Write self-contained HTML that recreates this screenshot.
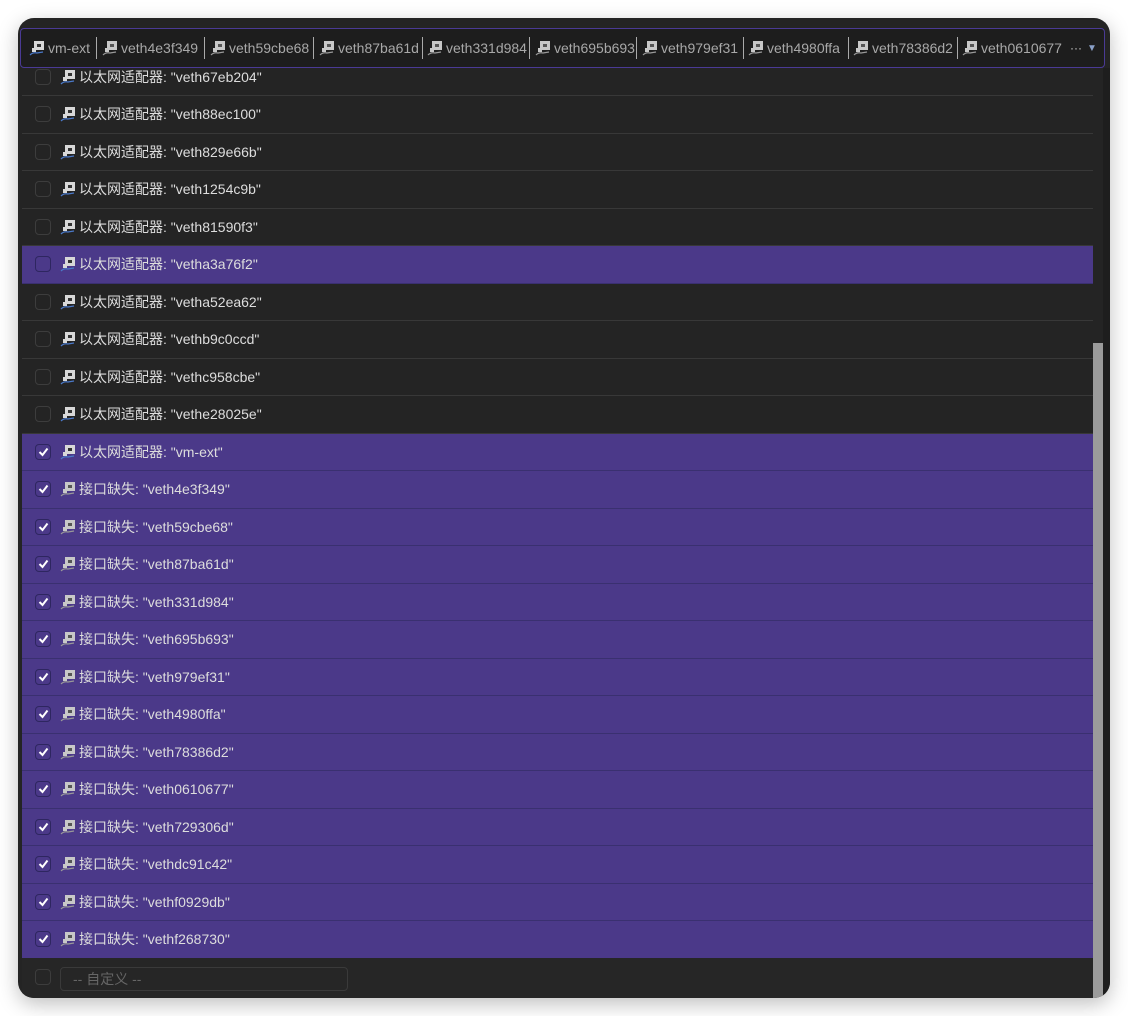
<!DOCTYPE html>
<html><head><meta charset="utf-8"><style>
*{margin:0;padding:0;box-sizing:border-box}
body{width:1128px;height:1016px;background:#fff;position:relative;overflow:hidden;font-family:"Liberation Sans","Noto Sans CJK SC",sans-serif}
.win{position:absolute;left:18px;top:18px;width:1092px;height:980px;background:#242424;border-radius:16px;overflow:hidden;box-shadow:0 6px 20px rgba(0,0,0,.25)}
.hdr{position:absolute;left:2px;top:10px;width:1085px;height:40px;background:#1d1d1d;border:1px solid #4a3a95;border-radius:4px;z-index:5}
.tab{position:absolute;top:0;height:38px;display:flex;align-items:center;color:#a8a8a8;font-size:14px;white-space:nowrap}
.tab svg{margin-right:3px}
.sep{position:absolute;top:8px;width:1px;height:22px;background:#aaa}
.row{position:absolute;left:4px;width:1071px;height:37.5px;display:flex;align-items:center;color:#ddd;font-size:14px;border-bottom:1px solid #383838}
.row.p{background:#4b3989;border-bottom:1px solid #3a3070}
.cb{width:16px;height:16px;border:1px solid #3d3d3d;border-radius:4px;margin-left:13px;margin-right:9px;display:flex;align-items:center;justify-content:center}
.p .cb{border-color:#2e2660}
.row svg{margin-right:3px}
.sb{position:absolute;left:1075px;top:325px;width:10px;height:655px;background:#9b9b9b}
.rs{position:absolute;left:1085px;top:50px;width:7px;height:930px;background:#1e1e1e}
.foot{position:absolute;left:4px;top:940px;width:1071px;height:40px;background:#262626}
.inp{position:absolute;left:38px;top:9px;width:288px;height:24px;border:1px solid #3a3a3a;border-radius:4px;color:#666;font-size:14px;padding-left:12px;line-height:22px}
</style></head><body>
<svg width="0" height="0" style="position:absolute"><defs>
<g id="ic"><rect x="5" y="1" width="10" height="9" fill="#d8d8d8"/><rect x="8" y="4" width="4" height="3" fill="#333"/><rect x="3" y="8" width="4" height="4" fill="#d8d8d8"/><path d="M1 15 Q4 12 8 13 L14 12" stroke="#4a78c8" stroke-width="1.3" fill="none"/></g>
<g id="ic2"><rect x="5" y="1" width="10" height="9" fill="#c8c8c8"/><rect x="8" y="4" width="4" height="3" fill="#555"/><rect x="3" y="8" width="4" height="4" fill="#c8c8c8"/><path d="M1 15 Q4 12 8 13 L14 12" stroke="#999" stroke-width="1.2" fill="none"/></g>
</defs></svg>
<div class="win">
<div class="hdr">
<div class="tab" style="left:8px"><svg width="16" height="16"><use href="#ic"/></svg>vm-ext</div>
<div class="sep" style="left:75px"></div>
<div class="tab" style="left:81px"><svg width="16" height="16"><use href="#ic2"/></svg>veth4e3f349</div>
<div class="sep" style="left:183px"></div>
<div class="tab" style="left:189px"><svg width="16" height="16"><use href="#ic2"/></svg>veth59cbe68</div>
<div class="sep" style="left:292px"></div>
<div class="tab" style="left:298px"><svg width="16" height="16"><use href="#ic2"/></svg>veth87ba61d</div>
<div class="sep" style="left:401px"></div>
<div class="tab" style="left:406px"><svg width="16" height="16"><use href="#ic2"/></svg>veth331d984</div>
<div class="sep" style="left:508px"></div>
<div class="tab" style="left:514px"><svg width="16" height="16"><use href="#ic2"/></svg>veth695b693</div>
<div class="sep" style="left:615px"></div>
<div class="tab" style="left:621px"><svg width="16" height="16"><use href="#ic2"/></svg>veth979ef31</div>
<div class="sep" style="left:722px"></div>
<div class="tab" style="left:727px"><svg width="16" height="16"><use href="#ic2"/></svg>veth4980ffa</div>
<div class="sep" style="left:827px"></div>
<div class="tab" style="left:832px"><svg width="16" height="16"><use href="#ic2"/></svg>veth78386d2</div>
<div class="sep" style="left:936px"></div>
<div class="tab" style="left:941px"><svg width="16" height="16"><use href="#ic2"/></svg>veth0610677</div>
<div class="tab" style="left:1049px;font-size:12px;color:#ccc">···</div>
<div class="tab" style="left:1066px;color:#8aa0c8;font-size:10px">▼</div>
</div>
<div id="list"></div>
<div class="sb"></div>
<div class="rs"></div>
<div class="foot"><div class="cb" style="position:absolute;left:0;top:11px;margin:0 0 0 13px"></div><div class="inp">-- 自定义 --</div></div>
</div>
<script>
var a=["以太网适配器: \"veth67eb204\"","以太网适配器: \"veth88ec100\"","以太网适配器: \"veth829e66b\"","以太网适配器: \"veth1254c9b\"","以太网适配器: \"veth81590f3\"","以太网适配器: \"vetha3a76f2\"","以太网适配器: \"vetha52ea62\"","以太网适配器: \"vethb9c0ccd\"","以太网适配器: \"vethc958cbe\"","以太网适配器: \"vethe28025e\"","以太网适配器: \"vm-ext\""];
var m=["veth4e3f349","veth59cbe68","veth87ba61d","veth331d984","veth695b693","veth979ef31","veth4980ffa","veth78386d2","veth0610677","veth729306d","vethdc91c42","vethf0929db","vethf268730"];
m.forEach(function(x){a.push('接口缺失: "'+x+'"')});
var h="";
a.forEach(function(t,i){var top=40.5+37.5*i;var p=(i==5||i>=10);var c=i>=10;
h+='<div class="row'+(p?' p':'')+'" style="top:'+top+'px">'+'<div class="cb">'+(c?'<svg width="11" height="10" style="margin:0"><path d="M1.5 5 L4.5 8 L9.5 1.5" stroke="#fff" stroke-width="2" fill="none"/></svg>':'')+'</div><svg width="16" height="16"><use href="'+(i>=11?'#ic2':'#ic')+'"/></svg>'+t.replace(/</g,'&lt;')+'</div>';});
document.getElementById("list").innerHTML=h;
</script>
</body></html>
